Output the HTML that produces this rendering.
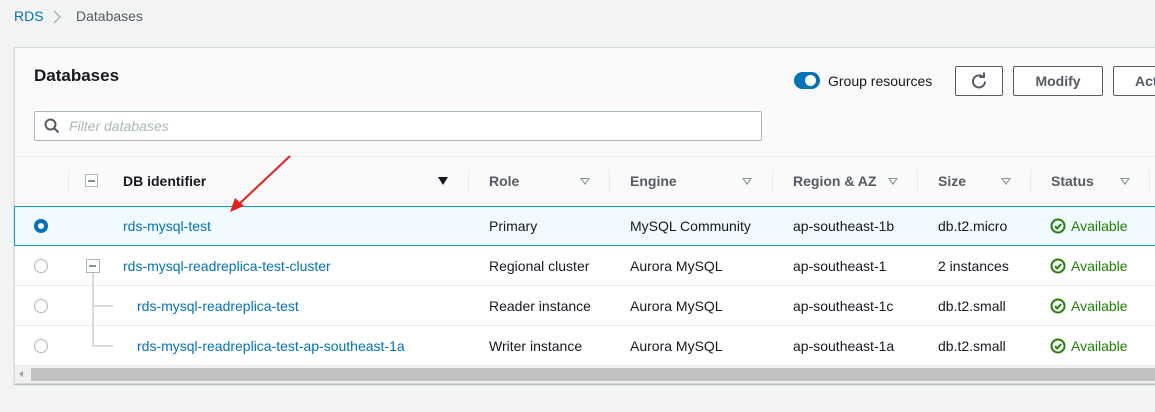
<!DOCTYPE html>
<html><head><meta charset="utf-8"><style>
*{margin:0;padding:0;box-sizing:border-box}
body{width:1155px;height:412px;background:#f2f3f3;font-family:"Liberation Sans",sans-serif;font-size:14px;color:#16191f;position:relative;overflow:hidden}
.a{position:absolute;white-space:nowrap}
.lnk{color:#0073bb}
.hd{font-weight:bold;color:#545b64}
.dv{position:absolute;width:1px;height:22px;background:#eaeded;top:170px}
.tri{position:absolute;width:0;height:0;border-left:5px solid transparent;border-right:5px solid transparent;border-top:7px solid #879596;top:178px}
.tri:after{content:"";position:absolute;left:-3px;top:-6px;border-left:3px solid transparent;border-right:3px solid transparent;border-top:4px solid #fafafa}
.row{position:absolute;left:15px;width:1140px;height:40px;border-bottom:1px solid #eaeded;background:#fff}
.rad{position:absolute;width:14px;height:14px;border-radius:50%;border:1.5px solid #aab7b8;left:34px;background:#fff}
.av{color:#1d8102}
.ck{position:absolute;left:1050px;width:16px;height:16px}
</style></head><body>
<div class="a lnk" style="left:14px;top:8px">RDS</div>
<svg class="a" style="left:52px;top:9px" width="10" height="16"><path d="M2 2l6 6-6 6" stroke="#aab7b8" stroke-width="1.5" fill="none"/></svg>
<div class="a" style="left:76px;top:8px;color:#545b64">Databases</div>

<div class="a" style="left:14px;top:47px;width:1150px;height:337px;background:#fafafa;border:1px solid #d5dbdb;box-shadow:0 1px 1px rgba(0,28,36,.3)"></div>
<div class="a" style="left:34px;top:66px;font-size:17px;font-weight:bold">Databases</div>
<div class="a" style="left:794px;top:72px;width:26px;height:17px;border-radius:9px;background:#0073bb"></div>
<div class="a" style="left:805px;top:75px;width:11px;height:11px;border-radius:50%;background:#fff"></div>
<div class="a" style="left:828px;top:73px;color:#16191f">Group resources</div>
<div class="a" style="left:955px;top:66px;width:48px;height:30px;border:1px solid #545b64;border-radius:2px;background:#fff"></div>
<svg class="a" style="left:970px;top:72px" width="18" height="18"><path d="M15 9.5A6 6 0 1 1 12.8 4.8" stroke="#545b64" stroke-width="2" fill="none"/><path d="M9.5 5h4.5V0.5" stroke="#545b64" stroke-width="2" fill="none"/></svg>
<div class="a" style="left:1013px;top:66px;width:90px;height:30px;border:1px solid #545b64;border-radius:2px;background:#fff;text-align:center;line-height:28px;font-weight:bold;color:#545b64">Modify</div>
<div class="a" style="left:1113px;top:66px;width:60px;height:30px;border:1px solid #545b64;border-radius:2px;background:#fff;line-height:28px;font-weight:bold;color:#545b64;padding-left:21px">Act</div>

<div class="a" style="left:34px;top:111px;width:728px;height:30px;border:1px solid #aab7b8;border-radius:2px;background:#fff"></div>
<svg class="a" style="left:44px;top:118px" width="16" height="16"><circle cx="6.5" cy="6.5" r="5" stroke="#545b64" stroke-width="2" fill="none"/><path d="M10 10l4.5 4.5" stroke="#545b64" stroke-width="2"/></svg>
<div class="a" style="left:69px;top:118px;color:#aab7b8;font-style:italic">Filter databases</div>

<div class="a" style="left:15px;top:156px;width:1140px;height:1px;background:#eaeded"></div>
<div class="dv" style="left:68px"></div>
<div class="a" style="left:85px;top:174px;width:13px;height:13px;border:1.5px solid #aab7b8;background:#fff"></div>
<div class="a" style="left:88px;top:180px;width:7px;height:1.5px;background:#879596"></div>
<div class="a" style="left:123px;top:173px;font-weight:bold">DB identifier</div>
<div class="a" style="left:438px;top:177px;border-left:5px solid transparent;border-right:5px solid transparent;border-top:8px solid #16191f"></div>
<div class="dv" style="left:468px"></div>
<div class="a hd" style="left:489px;top:173px">Role</div><div class="tri" style="left:580px"></div>
<div class="dv" style="left:609px"></div>
<div class="a hd" style="left:630px;top:173px">Engine</div><div class="tri" style="left:742px"></div>
<div class="dv" style="left:772px"></div>
<div class="a hd" style="left:793px;top:173px">Region &amp; AZ</div><div class="tri" style="left:888px"></div>
<div class="dv" style="left:917px"></div>
<div class="a hd" style="left:938px;top:173px">Size</div><div class="tri" style="left:1001px"></div>
<div class="dv" style="left:1030px"></div>
<div class="a hd" style="left:1051px;top:173px">Status</div><div class="tri" style="left:1120px"></div>
<div class="dv" style="left:1149px"></div>

<div class="row" style="top:206px;background:#f1faff;border:1px solid #00a1c9;left:14px;width:1145px"></div>
<div class="rad" style="top:219px;border:4px solid #0073bb"></div>
<div class="a lnk" style="left:123px;top:218px">rds-mysql-test</div>
<div class="a" style="left:489px;top:218px">Primary</div>
<div class="a" style="left:630px;top:218px">MySQL Community</div>
<div class="a" style="left:793px;top:218px">ap-southeast-1b</div>
<div class="a" style="left:938px;top:218px">db.t2.micro</div>

<div class="row" style="top:246px"></div>
<div class="rad" style="top:259px"></div>
<div class="a" style="left:86px;top:259px;width:14px;height:14px;border:1.5px solid #aab7b8;background:#fff"></div>
<div class="a" style="left:89px;top:265px;width:7px;height:1.5px;background:#879596"></div>
<div class="a lnk" style="left:123px;top:258px">rds-mysql-readreplica-test-cluster</div>
<div class="a" style="left:489px;top:258px">Regional cluster</div>
<div class="a" style="left:630px;top:258px">Aurora MySQL</div>
<div class="a" style="left:793px;top:258px">ap-southeast-1</div>
<div class="a" style="left:938px;top:258px">2 instances</div>

<div class="row" style="top:286px"></div>
<div class="rad" style="top:299px"></div>
<div class="a lnk" style="left:137px;top:298px">rds-mysql-readreplica-test</div>
<div class="a" style="left:489px;top:298px">Reader instance</div>
<div class="a" style="left:630px;top:298px">Aurora MySQL</div>
<div class="a" style="left:793px;top:298px">ap-southeast-1c</div>
<div class="a" style="left:938px;top:298px">db.t2.small</div>

<div class="row" style="top:326px"></div>
<div class="rad" style="top:339px"></div>
<div class="a lnk" style="left:137px;top:338px">rds-mysql-readreplica-test-ap-southeast-1a</div>
<div class="a" style="left:489px;top:338px">Writer instance</div>
<div class="a" style="left:630px;top:338px">Aurora MySQL</div>
<div class="a" style="left:793px;top:338px">ap-southeast-1a</div>
<div class="a" style="left:938px;top:338px">db.t2.small</div>

<div class="a" style="left:92px;top:273px;width:1.5px;height:73px;background:#d5dbdb"></div>
<div class="a" style="left:92px;top:305px;width:21px;height:1.5px;background:#d5dbdb"></div>
<div class="a" style="left:92px;top:345px;width:21px;height:1.5px;background:#d5dbdb"></div>

<svg class="ck" style="top:218px" viewBox="0 0 16 16"><circle cx="8" cy="8" r="6.5" stroke="#1d8102" stroke-width="2" fill="none"/><path d="M5 8.2l2.2 2.2L11.2 6" stroke="#1d8102" stroke-width="2" fill="none"/></svg>
<div class="a av" style="left:1071px;top:218px">Available</div>
<svg class="ck" style="top:258px" viewBox="0 0 16 16"><circle cx="8" cy="8" r="6.5" stroke="#1d8102" stroke-width="2" fill="none"/><path d="M5 8.2l2.2 2.2L11.2 6" stroke="#1d8102" stroke-width="2" fill="none"/></svg>
<div class="a av" style="left:1071px;top:258px">Available</div>
<svg class="ck" style="top:298px" viewBox="0 0 16 16"><circle cx="8" cy="8" r="6.5" stroke="#1d8102" stroke-width="2" fill="none"/><path d="M5 8.2l2.2 2.2L11.2 6" stroke="#1d8102" stroke-width="2" fill="none"/></svg>
<div class="a av" style="left:1071px;top:298px">Available</div>
<svg class="ck" style="top:338px" viewBox="0 0 16 16"><circle cx="8" cy="8" r="6.5" stroke="#1d8102" stroke-width="2" fill="none"/><path d="M5 8.2l2.2 2.2L11.2 6" stroke="#1d8102" stroke-width="2" fill="none"/></svg>
<div class="a av" style="left:1071px;top:338px">Available</div>

<div class="a" style="left:15px;top:366px;width:1140px;height:17px;background:#f0f0f0"></div>
<div class="a" style="left:31px;top:368px;width:1124px;height:13px;background:#c1c1c1"></div>
<div class="a" style="left:19px;top:371px;border-top:3px solid transparent;border-bottom:3px solid transparent;border-right:4px solid #a3a3a3"></div>

<svg class="a" style="left:225px;top:152px" width="70" height="65"><path d="M65 4L12 54" stroke="#e8201b" stroke-width="2"/><path d="M5 60l5-14 9 8z" fill="#e8201b"/></svg>
</body></html>
